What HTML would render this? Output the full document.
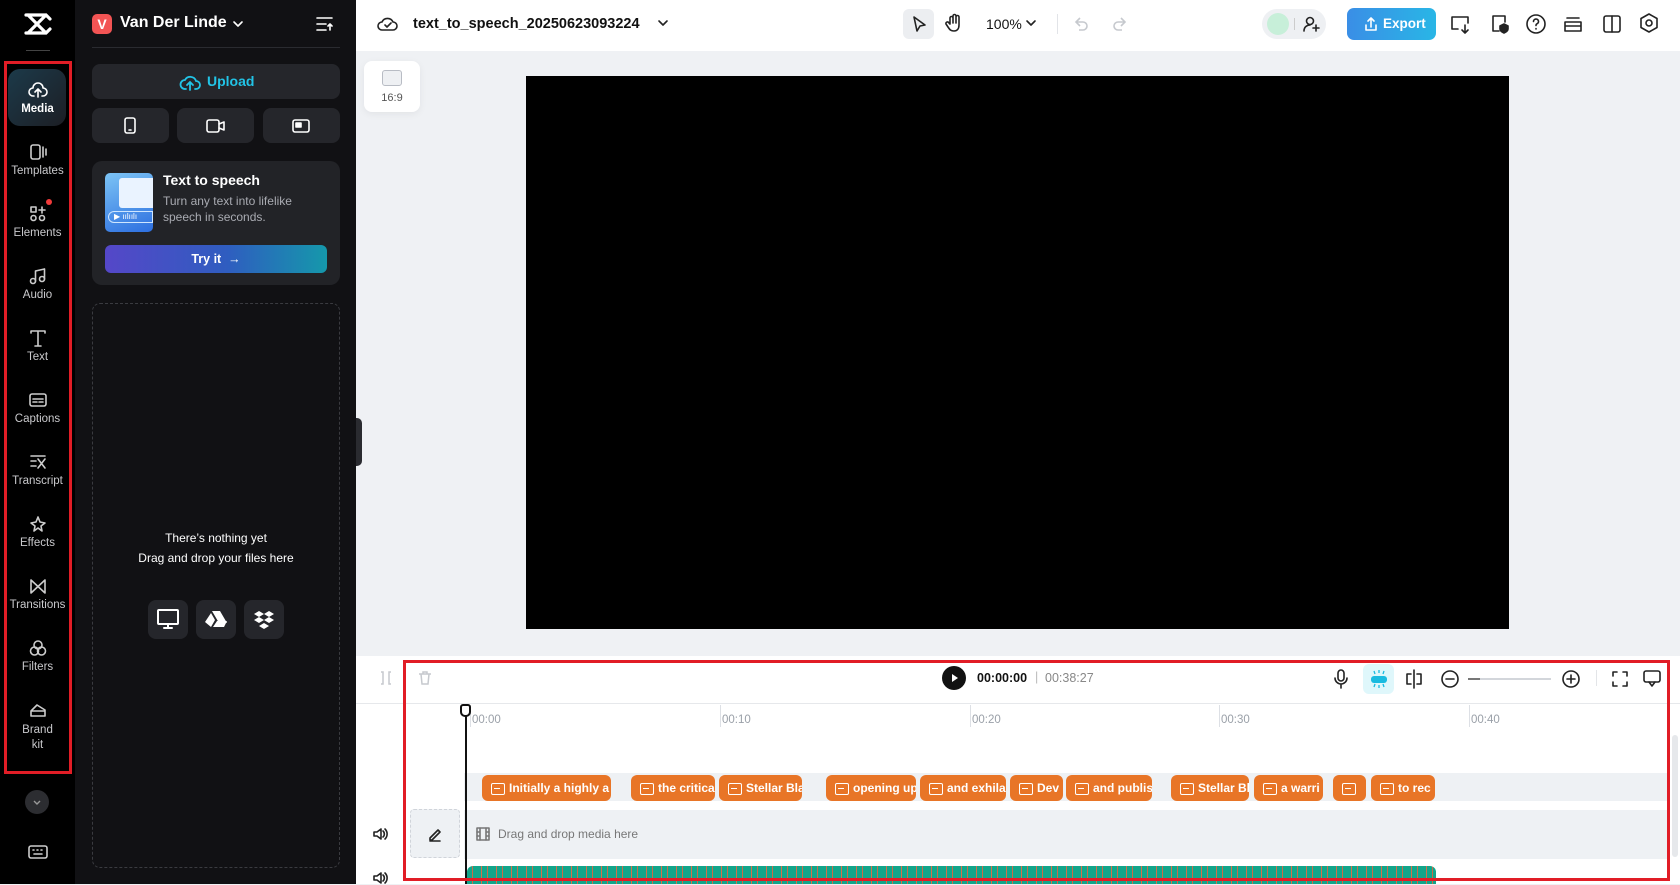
<!DOCTYPE html>
<html><head><meta charset="utf-8"><style>
*{margin:0;padding:0;box-sizing:border-box}
body{width:1680px;height:884px;overflow:hidden;position:relative;font-family:"Liberation Sans",sans-serif;background:#eff1f4}
.a{position:absolute}
.rail{left:0;top:0;width:75px;height:884px;background:#000}
.ri{position:absolute;left:0;width:75px;text-align:center;color:#c9c9cc;font-size:11.5px}
.ri svg{display:block;margin:0 auto 4px}
.panel{left:75px;top:0;width:281px;height:884px;background:#111114}
.btn{position:absolute;background:#25262b;border-radius:8px}
.ic{stroke:#fff;fill:none;stroke-width:1.6;stroke-linecap:round;stroke-linejoin:round}
.di{stroke:#222;fill:none;stroke-width:1.6;stroke-linecap:round;stroke-linejoin:round}
.clip{position:absolute;top:775px;height:26px;background:#e87527;border-radius:6px;color:#fff;font-size:12px;font-weight:bold;line-height:26px;padding-left:27px;overflow:hidden;white-space:nowrap}
.clip:before{content:"";position:absolute;left:9px;top:8px;width:12px;height:10px;border:1.5px solid #fff;border-radius:2px;background:linear-gradient(#fff,#fff) 2px 4px/6px 1px no-repeat}
.tl{position:absolute;top:714px;font-size:11.5px;color:#9aa0a8}
.tk{position:absolute;top:705px;width:1px;height:22px;background:#dde0e5}
</style></head><body>
<div class="a rail">
<svg class="a" style="left:24px;top:12px" width="28" height="24" viewBox="0 0 28 24"><path d="M2 3h20l4 4M2 21h20l4-4M4 3l18 18M22 3L4 21" stroke="#fff" stroke-width="3.2" fill="none" stroke-linecap="round"/></svg>
<div class="a" style="left:26px;top:50px;width:24px;height:1px;background:#444"></div>
<div class="a" style="left:8px;top:69px;width:58px;height:57px;border-radius:12px;background:linear-gradient(135deg,#1c3a4a,#1c1e24)"></div>
<div class="ri" style="top:81px;color:#fff;font-weight:bold"><svg width="20" height="18" class="ic"><path d="M6 15H5a4 4 0 0 1 0-8 5 5 0 0 1 10 0 4 4 0 0 1 0 8h-1M10 16V9M7 11l3-3 3 3"/></svg>Media</div>
<div class="ri" style="top:143px"><svg width="20" height="18" class="ic" style="stroke:#ccc"><rect x="3" y="2" width="9" height="14" rx="2"/><path d="M15 4v10M18 6v6"/></svg>Templates</div>
<div class="ri" style="top:205px"><svg width="20" height="18" class="ic" style="stroke:#ccc"><rect x="3" y="2" width="5" height="5"/><path d="M14 2v6M11 5h6"/><circle cx="5.5" cy="13" r="2.5"/><circle cx="14" cy="13" r="2.5"/></svg>Elements</div>
<div class="a" style="left:46px;top:199px;width:6px;height:6px;border-radius:50%;background:#f23a3a"></div>
<div class="ri" style="top:267px"><svg width="20" height="18" class="ic" style="stroke:#ccc"><circle cx="5" cy="14" r="2.5"/><circle cx="14" cy="12" r="2.5"/><path d="M7.5 14V4l9-2v10"/></svg>Audio</div>
<div class="ri" style="top:329px"><svg width="20" height="18" class="ic" style="stroke:#ccc"><path d="M3 4V2h14v2M10 2v15M7 17h6"/></svg>Text</div>
<div class="ri" style="top:391px"><svg width="20" height="18" class="ic" style="stroke:#ccc"><rect x="2" y="3" width="16" height="12" rx="2"/><path d="M5 8h10M5 11h4M11 11h4"/></svg>Captions</div>
<div class="ri" style="top:453px"><svg width="20" height="18" class="ic" style="stroke:#ccc"><path d="M3 3h14M3 8h5M3 13h5M10 6l7 9M17 6l-7 9"/></svg>Transcript</div>
<div class="ri" style="top:515px"><svg width="20" height="18" class="ic" style="stroke:#ccc"><path d="M10 2l2 5 5 1-4 3 1 5-4-3-4 3 1-5-4-3 5-1z"/></svg>Effects</div>
<div class="ri" style="top:577px"><svg width="20" height="18" class="ic" style="stroke:#ccc"><path d="M3 3v13l7-6.5zM17 3v13l-7-6.5z"/></svg>Transitions</div>
<div class="ri" style="top:639px"><svg width="20" height="18" class="ic" style="stroke:#ccc"><circle cx="10" cy="6" r="4"/><circle cx="6.5" cy="12" r="4"/><circle cx="13.5" cy="12" r="4"/></svg>Filters</div>
<div class="ri" style="top:701px;line-height:15px"><svg width="20" height="18" class="ic" style="stroke:#ccc"><path d="M3 10l6-6 8 5v6H3zM3 10h14"/></svg>Brand<br>kit</div>
<div class="a" style="left:25px;top:790px;width:24px;height:24px;border-radius:50%;background:#2c2d31"><svg width="24" height="24"><path d="M9 11l3 3 3-3" stroke="#999" fill="none" stroke-width="1.4"/></svg></div>
<svg class="a ic" style="left:28px;top:844px;stroke:#ccc" width="20" height="16"><rect x="1" y="2" width="18" height="12" rx="2"/><path d="M5 6h1M9 6h1M13 6h1M6 10h8"/></svg>
</div>
<div class="a" style="left:4px;top:61px;width:68px;height:713px;border:3px solid #e11d26"></div>
<div class="a panel"></div>
<div class="a" style="left:92px;top:14px;width:20px;height:20px;border-radius:5px;background:#f25454;color:#fff;font-size:14px;font-weight:bold;text-align:center;line-height:20px">V</div>
<div class="a" style="left:120px;top:14px;color:#fff;font-size:16px;font-weight:bold">Van Der Linde</div>
<svg class="a ic" style="left:232px;top:19px" width="12" height="10"><path d="M2 3l4 4 4-4"/></svg>
<svg class="a ic" style="left:316px;top:16px" width="18" height="16"><path d="M1 2h15M1 8h9M1 14h9M14 14V8M12 10l2-2 2 2"/></svg>
<div class="a" style="left:92px;top:47px;width:248px;height:1px;background:#2a2b30"></div>
<div class="btn" style="left:92px;top:64px;width:248px;height:35px"></div>
<svg class="a" style="left:179px;top:72px" width="22" height="20" fill="none" stroke="#22c3e6" stroke-width="1.8" stroke-linecap="round"><path d="M7 17H6a4.5 4.5 0 0 1 0-9 6 6 0 0 1 11 1 4 4 0 0 1 0 8h-1M11 18v-8M8 13l3-3 3 3"/></svg>
<div class="a" style="left:207px;top:73px;color:#22c3e6;font-size:14px;font-weight:bold">Upload</div>
<div class="btn" style="left:92px;top:108px;width:77px;height:35px"></div>
<div class="btn" style="left:177px;top:108px;width:77px;height:35px"></div>
<div class="btn" style="left:263px;top:108px;width:77px;height:35px"></div>
<svg class="a ic" style="left:124px;top:117px" width="12" height="17"><rect x="1" y="1" width="10" height="15" rx="2"/><path d="M5 13h2"/></svg>
<svg class="a ic" style="left:206px;top:119px" width="20" height="14"><rect x="1" y="1" width="12" height="12" rx="2"/><path d="M13 5l5-2v8l-5-2"/></svg>
<svg class="a ic" style="left:292px;top:119px" width="18" height="14"><rect x="1" y="1" width="16" height="12" rx="2"/><rect x="4" y="4" width="5" height="4" fill="#fff"/></svg>
<div class="btn" style="left:92px;top:161px;width:248px;height:124px;border-radius:10px;background:#222327"></div>
<div class="a" style="left:105px;top:173px;width:48px;height:59px;border-radius:5px;background:linear-gradient(160deg,#7cc4f5,#2d6fe0)"><div class="a" style="left:14px;top:5px;width:34px;height:30px;background:#eaf3ff;border-radius:3px 0 0 3px"></div><div class="a" style="left:3px;top:38px;width:45px;height:12px;border:1px solid #cfe6ff;border-radius:6px 0 0 6px;color:#fff;font-size:8px;line-height:10px;padding-left:5px">▶ ıılıılı</div></div>
<div class="a" style="left:163px;top:172px;color:#fff;font-size:14px;font-weight:bold">Text to speech</div>
<div class="a" style="left:163px;top:193px;color:#a9abb2;font-size:12px;line-height:16px">Turn any text into lifelike<br>speech in seconds.</div>
<div class="a" style="left:105px;top:245px;width:222px;height:28px;border-radius:6px;background:linear-gradient(90deg,#5547c8,#2f5dc0 55%,#1598ab);color:#fff;font-size:12.5px;font-weight:bold;text-align:center;line-height:28px">Try it &nbsp;→</div>
<div class="a" style="left:92px;top:303px;width:248px;height:565px;border:1px dashed #3a3b40;border-radius:8px"></div>
<div class="a" style="left:92px;top:528px;width:248px;text-align:center;color:#fff;font-size:12px;line-height:20px">There’s nothing yet<br>Drag and drop your files here</div>
<div class="btn" style="left:148px;top:600px;width:40px;height:39px"></div>
<div class="btn" style="left:196px;top:600px;width:40px;height:39px"></div>
<div class="btn" style="left:244px;top:600px;width:40px;height:39px"></div>
<svg class="a ic" style="left:157px;top:609px;stroke-width:2" width="22" height="20"><rect x="1" y="1" width="20" height="14" rx="1"/><path d="M7 19h8M11 15v4"/></svg>
<svg class="a" style="left:205px;top:610px" width="22" height="19"><path d="M7 1h8l7 12h-8zM6 3l4 7-4 7-6-5zM8 17l4-6h10l-3 6z" fill="#fff"/></svg>
<svg class="a" style="left:253px;top:610px" width="22" height="20"><path d="M6 1l5 3-5 3-5-3zM16 1l5 3-5 3-5-3zM6 7l5 3-5 3-5-3zM16 7l5 3-5 3-5-3zM11 13l5 3-5 3-5-3z" fill="#fff"/></svg>
<div class="a" style="left:356px;top:418px;width:6px;height:48px;background:#2a2b30;border-radius:0 5px 5px 0"></div>
<div class="a" style="left:356px;top:0;width:1324px;height:51px;background:#fff"></div>
<svg class="a di" style="left:377px;top:14px" width="22" height="20"><path d="M6 16H5a4 4 0 0 1 0-8 6 6 0 0 1 11 0 4 4 0 0 1 0 8H6zM8 11l2 2 4-4"/></svg>
<div class="a" style="left:413px;top:16px;font-size:14.5px;font-weight:bold;color:#111">text_to_speech_20250623093224</div>
<svg class="a di" style="left:657px;top:19px" width="12" height="10"><path d="M2 2l4 4 4-4"/></svg>
<div class="a" style="left:903px;top:9px;width:31px;height:30px;border-radius:6px;background:#eceef1"></div>
<svg class="a di" style="left:911px;top:15px" width="16" height="20"><path d="M3 2l11 8-5 1-3 5z"/></svg>
<svg class="a di" style="left:945px;top:13px" width="18" height="20"><path d="M5 11V5a1.5 1.5 0 0 1 3 0v5V3a1.5 1.5 0 0 1 3 0v7V4a1.5 1.5 0 0 1 3 0v8c0 4-2 6-5 6s-4-1-6-4l-2-3a1.5 1.5 0 0 1 3-1z"/></svg>
<div class="a" style="left:986px;top:16px;font-size:14px;color:#111">100%</div>
<svg class="a di" style="left:1025px;top:19px" width="12" height="10"><path d="M2 2l4 4 4-4"/></svg>
<div class="a" style="left:1057px;top:14px;width:1px;height:20px;background:#e2e4e8"></div>
<svg class="a" style="left:1073px;top:15px" width="16" height="18" fill="none" stroke="#c6c9ce" stroke-width="1.6"><path d="M4 7h6a4 4 0 0 1 0 8H6M7 3L3 7l4 4"/></svg>
<svg class="a" style="left:1112px;top:15px" width="16" height="18" fill="none" stroke="#c6c9ce" stroke-width="1.6"><path d="M12 7H6a4 4 0 0 0 0 8h4M9 3l4 4-4 4"/></svg>
<div class="a" style="left:1262px;top:9px;width:64px;height:30px;border-radius:15px;background:#eef0f3"></div>
<div class="a" style="left:1267px;top:13px;width:22px;height:22px;border-radius:50%;background:#c7efd9"></div>
<div class="a" style="left:1294px;top:18px;width:1px;height:12px;background:#ccc"></div>
<svg class="a di" style="left:1303px;top:15px" width="18" height="18"><circle cx="7" cy="6" r="3.5"/><path d="M1 16c0-4 3-6 6-6M13 10v6M10 13h6"/></svg>
<div class="a" style="left:1347px;top:8px;width:89px;height:32px;border-radius:7px;background:linear-gradient(90deg,#3a8ee6,#29b6e6);color:#fff;font-size:13.5px;font-weight:bold;line-height:32px;padding-left:36px">Export</div>
<svg class="a ic" style="left:1363px;top:16px" width="16" height="16"><path d="M3 9v5h10V9M8 11V2M5 5l3-3 3 3"/></svg>
<svg class="a di" style="left:1449px;top:13px" width="22" height="22"><path d="M9 16H3V4h16v6M13 17l3 3 3-3M16 12v8"/></svg>
<svg class="a di" style="left:1489px;top:13px" width="22" height="22"><path d="M10 18H4V3h12v6"/><path d="M15 11l4 2v3c0 2-2 3-4 4-2-1-4-2-4-4v-3z" fill="#222"/></svg>
<svg class="a di" style="left:1525px;top:13px" width="22" height="22"><circle cx="11" cy="11" r="9"/><path d="M8.5 8.5a2.5 2.5 0 1 1 3.5 2.3c-.7.3-1 .8-1 1.7M11 15.5v.5"/></svg>
<svg class="a di" style="left:1562px;top:13px" width="22" height="22"><path d="M5 5h12M3 9h16v9H3zM3 13h16"/></svg>
<svg class="a di" style="left:1601px;top:13px" width="22" height="22"><rect x="3" y="3" width="16" height="16" rx="2"/><path d="M11 3v16"/></svg>
<svg class="a di" style="left:1638px;top:12px" width="22" height="22"><path d="M11 2l8 4.5v9L11 20l-8-4.5v-9z"/><circle cx="11" cy="11" r="3"/></svg>
<div class="a" style="left:364px;top:61px;width:56px;height:51px;background:#fff;border-radius:8px;box-shadow:0 2px 8px rgba(0,0,0,.06)"></div>
<div class="a" style="left:382px;top:70px;width:20px;height:16px;border:1.5px solid #b8bcc4;border-radius:3px;background:#eef0f3"></div>
<div class="a" style="left:364px;top:92px;width:56px;text-align:center;font-size:11px;color:#555">16:9</div>
<div class="a" style="left:526px;top:76px;width:983px;height:553px;background:#000"></div>
<div class="a" style="left:356px;top:656px;width:1324px;height:228px;background:#fff"></div>
<div class="a" style="left:356px;top:703px;width:1324px;height:1px;background:#e6e8eb"></div>
<svg class="a" style="left:378px;top:670px" width="16" height="16" fill="none" stroke="#c6c9ce" stroke-width="1.5"><path d="M3 2h2v12H3M13 2h-2v12h2"/></svg>
<svg class="a" style="left:417px;top:670px" width="16" height="16" fill="none" stroke="#c6c9ce" stroke-width="1.5"><path d="M2 4h12M6 4V2h4v2M4 4l1 10h6l1-10"/></svg>
<div class="a" style="left:942px;top:666px;width:24px;height:24px;border-radius:50%;background:#111"><svg width="24" height="24"><path d="M10 8l6 4-6 4z" fill="#fff"/></svg></div>
<div class="a" style="left:977px;top:671px;font-size:12.5px;font-weight:bold;color:#111">00:00:00</div>
<div class="a" style="left:1035px;top:670px;font-size:12.5px;color:#bbb">|</div>
<div class="a" style="left:1045px;top:671px;font-size:12.5px;color:#888">00:38:27</div>
<svg class="a di" style="left:1332px;top:669px" width="18" height="20"><rect x="6" y="1" width="6" height="11" rx="3"/><path d="M3 9a6 6 0 0 0 12 0M9 15v4"/></svg>
<div class="a" style="left:1363px;top:664px;width:31px;height:30px;border-radius:6px;background:#dff7fb"></div>
<svg class="a" style="left:1368px;top:669px" width="22" height="20"><rect x="3" y="7" width="16" height="7" rx="3" fill="#1bbbe0"/><path d="M11 1v3M11 16v3M6 2l1 3M16 2l-1 3M6 18l1-3M16 18l-1-3" stroke="#1bbbe0" stroke-width="1.3"/></svg>
<svg class="a di" style="left:1404px;top:669px" width="20" height="20"><path d="M10 1v18M7 5H3v10h4M13 5h4v10h-4"/></svg>
<svg class="a di" style="left:1440px;top:669px" width="20" height="20"><circle cx="10" cy="10" r="8"/><path d="M6 10h8"/></svg>
<div class="a" style="left:1468px;top:678px;width:83px;height:1.5px;background:#d3d6db"></div>
<div class="a" style="left:1468px;top:678px;width:12px;height:2px;background:#777"></div>
<svg class="a di" style="left:1561px;top:669px" width="20" height="20"><circle cx="10" cy="10" r="8"/><path d="M6 10h8M10 6v8"/></svg>
<div class="a" style="left:1596px;top:670px;width:1px;height:16px;background:#e3e5e8"></div>
<svg class="a di" style="left:1611px;top:670px" width="18" height="18"><path d="M2 6V2h4M12 2h4v4M16 12v4h-4M6 16H2v-4"/></svg>
<svg class="a di" style="left:1642px;top:669px" width="20" height="20"><rect x="2" y="2" width="16" height="11" rx="2"/><path d="M7 13l3 4 3-4"/></svg>
<div class="tk" style="left:470px"></div><div class="tk" style="left:720px"></div><div class="tk" style="left:970px"></div><div class="tk" style="left:1219px"></div><div class="tk" style="left:1469px"></div>
<div class="tl" style="left:472px">00:00</div><div class="tl" style="left:722px">00:10</div><div class="tl" style="left:972px">00:20</div><div class="tl" style="left:1221px">00:30</div><div class="tl" style="left:1471px">00:40</div>
<div class="a" style="left:464px;top:773px;width:1205px;height:28px;background:#eef1f4"></div>
<div class="clip" style="left:482px;width:129px">Initially a highly a</div>
<div class="clip" style="left:631px;width:84px">the critica</div>
<div class="clip" style="left:719px;width:83px">Stellar Bla</div>
<div class="clip" style="left:826px;width:90px">opening up</div>
<div class="clip" style="left:920px;width:86px">and exhila</div>
<div class="clip" style="left:1010px;width:53px">Dev</div>
<div class="clip" style="left:1066px;width:86px">and publis</div>
<div class="clip" style="left:1171px;width:78px">Stellar Bl</div>
<div class="clip" style="left:1254px;width:69px">a warri</div>
<div class="clip" style="left:1333px;width:33px"></div>
<div class="clip" style="left:1371px;width:64px">to rec</div>
<div class="a" style="left:464px;top:810px;width:1205px;height:49px;background:#eef1f4"></div>
<div class="a" style="left:410px;top:809px;width:50px;height:49px;border:1px dashed #d0d4da;border-radius:4px;background:#eef1f4"></div>
<svg class="a di" style="left:427px;top:826px" width="16" height="16"><path d="M3 12l8-8 2 2-8 8H3zM3 15h10"/></svg>
<svg class="a di" style="left:476px;top:827px;stroke:#777" width="14" height="14"><rect x="1" y="1" width="12" height="12"/><path d="M4 1v12M10 1v12M1 5h3M1 9h3M10 5h3M10 9h3"/></svg>
<div class="a" style="left:498px;top:827px;font-size:12px;color:#777">Drag and drop media here</div>
<svg class="a di" style="left:372px;top:827px" width="16" height="14"><path d="M2 5h3l4-3v10L5 9H2zM11 4a4 4 0 0 1 0 6M13 2a7 7 0 0 1 0 10"/></svg>
<svg class="a di" style="left:372px;top:871px" width="16" height="14"><path d="M2 5h3l4-3v10L5 9H2zM11 4a4 4 0 0 1 0 6M13 2a7 7 0 0 1 0 10"/></svg>
<div class="a" style="left:467px;top:866px;width:969px;height:18px;border-radius:6px 6px 0 0;background:repeating-linear-gradient(90deg,#12a58a 0 5px,#c86a4a 5px 6px,#12a58a 6px 11px,#12a58a 11px 14px,#d0704a 14px 15px)"></div>
<div class="a" style="left:465px;top:714px;width:1.5px;height:170px;background:#111"></div>
<div class="a" style="left:460px;top:704px;width:11px;height:13px;border:2px solid #111;border-radius:3px 3px 5px 5px;background:#fff"></div>
<div class="a" style="left:1672px;top:735px;width:6px;height:122px;border-radius:3px;background:#e6e8eb"></div>
<div class="a" style="left:403px;top:660px;width:1267px;height:221px;border:3px solid #e11d26"></div>
</body></html>
